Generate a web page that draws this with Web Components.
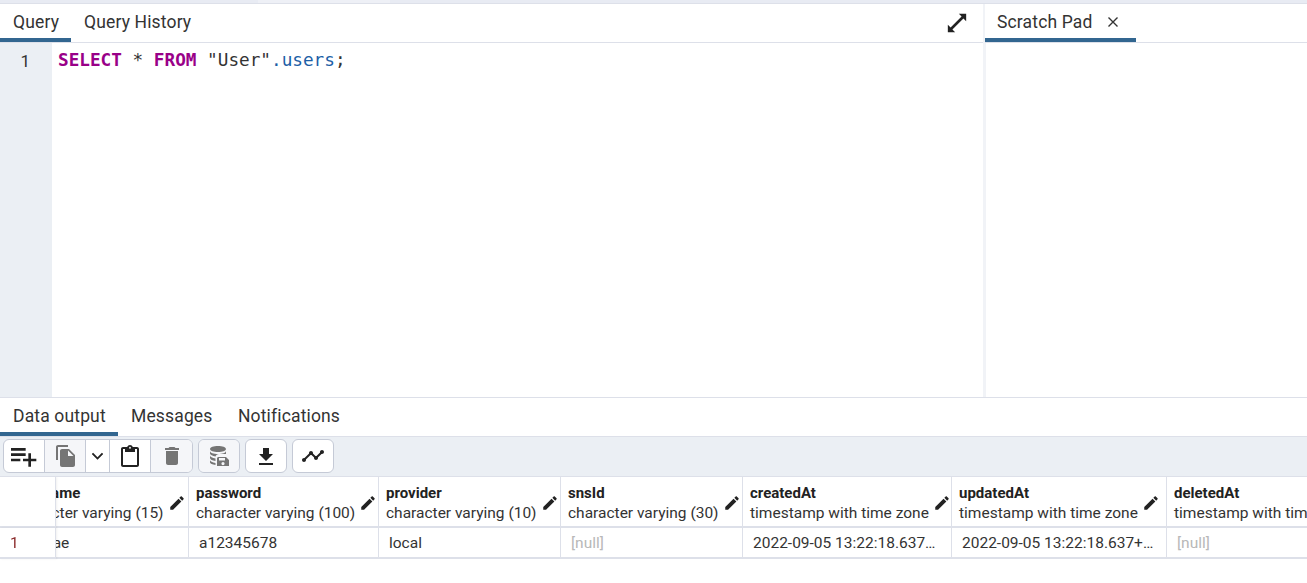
<!DOCTYPE html>
<html>
<head>
<meta charset="utf-8">
<title>Query Tool</title>
<style>
html, body { margin: 0; height: 100%; overflow: hidden; background: #fff; }
body { font-family: Roboto, "Liberation Sans", sans-serif; color: #222; }
</style>
</head>
<body>
<query-tool></query-tool>

<template id="query-tool-tpl">
  <style>
    :host { display: flex; flex-direction: column; height: 583px; background: #fff; }
    .strip { height: 3px; background: #e8ebf3; border-bottom: 1px solid #dde0e9; padding-left: 258px; flex: none; }
    .strip i { display: block; width: 132px; height: 3px; background: #eef0f6; }
    .top { height: 393px; display: flex; flex: none; border-bottom: 1px solid #dde0e9; }
    .left { width: 983px; display: flex; flex-direction: column; flex: none; }
    .splitter { width: 2px; background: #f1f3f7; flex: none; }
    .right { flex: 1; display: flex; flex-direction: column; min-width: 0; }
    .pad { flex: 1; border-left: 1px solid #f1f3f7; }
    sql-editor { flex: 1; }
    .expand { width: 22px; height: 22px; color: #222; margin-right: 15px; }
  </style>
  <div class="strip"><i></i></div>
  <div class="top">
    <div class="left">
      <tab-bar>
        <tab-item active width="71">Query</tab-item>
        <tab-item>Query History</tab-item>
        <svg slot="end" class="expand" viewBox="0 0 24 24" fill="currentColor"><path d="M22 2v8l-3-3L7 19l3 3H2v-8l3 3L17 5l-3-3z"/></svg>
      </tab-bar>
      <sql-editor></sql-editor>
    </div>
    <div class="splitter"></div>
    <div class="right">
      <tab-bar>
        <tab-item active closable width="151">Scratch Pad</tab-item>
      </tab-bar>
      <div class="pad"></div>
    </div>
  </div>
  <tab-bar short>
    <tab-item active width="118">Data output</tab-item>
    <tab-item>Messages</tab-item>
    <tab-item>Notifications</tab-item>
  </tab-bar>
  <result-toolbar></result-toolbar>
  <data-grid></data-grid>
</template>

<template id="tab-bar-tpl">
  <style>
    :host { display: flex; align-items: stretch; height: 38px; flex: none; border-bottom: 1px solid #dde0e9; box-sizing: content-box; }
    .tabs { display: flex; align-items: stretch; }
    .end { margin-left: auto; display: flex; align-items: center; }
  </style>
  <div class="tabs"><slot></slot></div>
  <div class="end"><slot name="end"></slot></div>
</template>

<template id="tab-item-tpl">
  <style>
    :host { display: flex; align-items: center; box-sizing: border-box; padding: 1px 12.500px 0 13px; font-size: 17.500px; letter-spacing: .15px; color: #333; white-space: nowrap; }
    :host([active]) { border-bottom: 4px solid #326690; }
    :host(:not([active])) { padding-bottom: 4px; }
    :host([closable]) { padding-left: 12px; }
    .x { margin-left: 14px; width: 12px; height: 12px; }
  </style>
  <slot></slot>
</template>

<template id="sql-editor-tpl">
  <style>
    :host { display: flex; min-height: 0; background: #fff; }
    .gutter { width: 52px; background: #ebeff4; flex: none; box-sizing: border-box; padding: 8px 22px 0 0; text-align: right; font: 17px/20px Roboto, sans-serif; color: #333; }
    pre { margin: 0; padding: 7px 6px; font: 17.700px/21px "DejaVu Sans Mono", "Liberation Mono", monospace; color: #333; }
    .kw { color: #990088; font-weight: 600; }
    .var { color: #1c5ea6; }
  </style>
  <div class="gutter">1</div>
  <pre><span class="kw">SELECT</span> * <span class="kw">FROM</span> "User"<span class="var">.users</span>;</pre>
</template>

<template id="result-toolbar-tpl">
  <style>
    :host { display: flex; gap: 5px; height: 40px; box-sizing: border-box; padding: 2px 3px 3px 3px; background: #ebeff4; flex: none; border-bottom: 1px solid #dde0e9; }
    .group { display: flex; border: 1px solid #c5cad6; border-radius: 6px; background: #fff; overflow: hidden; }
    button { all: unset; display: flex; align-items: center; justify-content: center; width: 41px; height: 100%; border-right: 1px solid #c5cad6; color: #222; box-sizing: border-box; }
    button:last-child { border-right: 0; }
    button.off { background: #f5f6f9; color: #757575; }
    button.narrow { width: 24px; }
    .solo button { width: 40px; }
    svg { width: 24px; height: 24px; fill: currentColor; display: block; }
    svg.big { width: 32px; height: 32px; flex: none; margin-left: -2px; }
  </style>
  <div class="group">
    <button><svg class="big" viewBox="0 0 24 24"><path d="M14 10H3v2h11zm0-4H3v2h11zm4 8v-4h-2v4h-4v2h4v4h2v-4h4v-2zM3 16h7v-2H3z"/></svg></button>
    <button class="off"><svg viewBox="0 0 24 24"><path d="M15 1H5c-1.100 0-2 .9-2 2v13h2V3h10zm1 4H9c-1.100 0-2 .9-2 2v14c0 1.100.9 2 2 2h11c1.100 0 2-.9 2-2V11zm-1 7V6.500L20.500 12z"/></svg></button>
    <button class="narrow"><svg viewBox="0 0 24 24"><path d="M7.400 8.600 12 13.200l4.600-4.600L18 10l-6 6-6-6z"/></svg></button>
    <button><svg viewBox="0 0 24 24"><path d="M19 3h-4.200C14.400 1.800 13.300 1 12 1s-2.400.8-2.800 2H5c-1.100 0-2 .9-2 2v16c0 1.100.9 2 2 2h14c1.100 0 2-.9 2-2V5c0-1.100-.9-2-2-2zm-7-.2c.5 0 .9.400.9.900s-.4 1-.9 1-.9-.5-.9-1 .4-.9.9-.9zM19 21H5V5h2v3h10V5h2z"/></svg></button>
    <button class="off"><svg viewBox="0 0 24 24"><path d="M6 19c0 1.100.9 2 2 2h8c1.100 0 2-.9 2-2V7H6zM19 4h-3.500l-1-1h-5l-1 1H5v2h14z"/></svg></button>
  </div>
  <div class="group solo">
    <button class="off"><svg viewBox="0 0 24 24"><path d="M11 2c4.400 0 8 1.300 8 3s-3.600 3-8 3-8-1.300-8-3 3.600-3 8-3zM3 7c0 1.700 3.600 3 8 3s8-1.300 8-3v3h-7c-1.700 0-3 .9-3.500 2.400C5.700 12 3 11 3 9.500zm0 4.500c0 1.400 2.300 2.600 5.500 2.900V17C5.400 16.700 3 15.500 3 14zm0 4.500c0 1.400 2.400 2.600 5.500 3V21C5.400 20.700 3 19.500 3 18.500zM11 13h8l3 3v6H10v-8zm5 5a1.600 1.600 0 1 0 0 3.200 1.600 1.600 0 0 0 0-3.200zM12 14v2.500h6V14z"/></svg></button>
  </div>
  <div class="group solo">
    <button><svg viewBox="0 0 24 24"><path d="M19 10h-4V4H9v6H5l7 7zM5 19v2h14v-2z"/></svg></button>
  </div>
  <div class="group solo">
    <button><svg viewBox="0 0 24 24"><path d="M23 8c0 1.100-.9 2-2 2-.2 0-.4 0-.5-.1l-3.600 3.600c.1.100.1.300.1.500 0 1.100-.9 2-2 2s-2-.9-2-2c0-.2 0-.4.100-.5l-2.600-2.600c-.1.100-.3.100-.5.100s-.4 0-.5-.1l-4.600 4.600c.1.100.1.300.1.500 0 1.100-.9 2-2 2s-2-.9-2-2 .9-2 2-2c.2 0 .4 0 .5.100l4.600-4.600C8 9.400 8 9.200 8 9c0-1.100.9-2 2-2s2 .9 2 2c0 .2 0 .4-.1.500l2.600 2.600c.1-.1.300-.1.500-.1s.4 0 .5.100l3.600-3.600C19 8.400 19 8.200 19 8c0-1.100.9-2 2-2s2 .9 2 2z"/></svg></button>
  </div>
</template>

<template id="data-grid-tpl">
  <style>
    :host { display: block; flex: 1; min-height: 0; overflow: hidden; background: #fff; font-size: 15.500px; }
    .scroll { overflow: hidden; height: 100%; }
    .table { display: grid; grid-template-columns: 56px 183px 190px 182px 182px 209px 215px 215px; grid-template-rows: 51px 31px; width: max-content; }
    .cell { box-sizing: border-box; border-right: 1px solid #dde0e9; border-bottom: 2px solid #dde0e9; white-space: nowrap; overflow: hidden; color: #222; }
    .head { display: flex; align-items: flex-start; padding: 6px 0 0 7px; line-height: 20px; }
    .head b { display: block; font-weight: 700; font-size: 15px; }
    .head span { display: block; color: #333; }
    .head svg { flex: none; width: 18px; height: 18px; margin: 11px 0 0 4px; fill: #222; }
    .body { padding: 5px 10px; line-height: 20px; text-overflow: ellipsis; color: #333; }
    .null { color: #b8b8b8; }
    .num { position: sticky; left: 0; z-index: 2; background: #fff; padding-left: 10px; color: #8a2a2a; box-shadow: 1px 0 2px rgba(0,0,0,.06); }
    .head.num { padding: 0; }
  </style>
  <div class="scroll"><div class="table"></div></div>
</template>

<script>
function stamp(host, id) {
  const root = host.attachShadow({mode: 'open'});
  root.appendChild(document.getElementById(id).content.cloneNode(true));
  return root;
}

class TabBar extends HTMLElement {
  constructor() { super(); stamp(this, 'tab-bar-tpl'); }
}

class TabItem extends HTMLElement {
  constructor() {
    super();
    this.root = stamp(this, 'tab-item-tpl');
  }
  connectedCallback() {
    const w = this.getAttribute('width');
    if (w) this.style.width = w + 'px';
    if (this.hasAttribute('closable') && !this.root.querySelector('.x')) {
      this.root.innerHTML += '<svg class="x" viewBox="0 0 12 12" fill="none" stroke="#333" stroke-width="1.400"><path d="M1.500 1.500l9 9M10.500 1.500l-9 9"/></svg>';
    }
  }
}

class SqlEditor extends HTMLElement {
  constructor() { super(); stamp(this, 'sql-editor-tpl'); }
}

class ResultToolbar extends HTMLElement {
  constructor() { super(); stamp(this, 'result-toolbar-tpl'); }
}

class DataGrid extends HTMLElement {
  constructor() {
    super();
    this.root = stamp(this, 'data-grid-tpl');
  }
  get columns() {
    return [
      ['username', 'character varying (15)', 'hyunjae'],
      ['password', 'character varying (100)', 'a12345678'],
      ['provider', 'character varying (10)', 'local'],
      ['snsId', 'character varying (30)', null],
      ['createdAt', 'timestamp with time zone', '2022-09-05 13:22:18.637+09'],
      ['updatedAt', 'timestamp with time zone', '2022-09-05 13:22:18.637+09'],
      ['deletedAt', 'timestamp with time zone', null]
    ];
  }
  connectedCallback() {
    const pencil = '<svg viewBox="0 0 24 24"><path d="M3 17.250V21h3.750L17.800 9.940l-3.750-3.750zM20.700 7.040c.4-.4.4-1 0-1.400l-2.340-2.340c-.4-.4-1-.4-1.400 0l-1.830 1.830 3.750 3.750z"/></svg>';
    let head = '<div class="cell head num"></div>';
    let row = '<div class="cell body num">1</div>';
    for (const c of this.columns) {
      head += `<div class="cell head"><div><b>${c[0]}</b><span>${c[1]}</span></div>${pencil}</div>`;
      row += c[2] === null
        ? '<div class="cell body null">[null]</div>'
        : `<div class="cell body">${c[2]}</div>`;
    }
    this.root.querySelector('.table').innerHTML = head + row;
    this.root.querySelector('.scroll').scrollLeft = 50;
  }
}

class QueryTool extends HTMLElement {
  constructor() { super(); stamp(this, 'query-tool-tpl'); }
}

customElements.define('tab-bar', TabBar);
customElements.define('tab-item', TabItem);
customElements.define('sql-editor', SqlEditor);
customElements.define('result-toolbar', ResultToolbar);
customElements.define('data-grid', DataGrid);
customElements.define('query-tool', QueryTool);
</script>
</body>
</html>
